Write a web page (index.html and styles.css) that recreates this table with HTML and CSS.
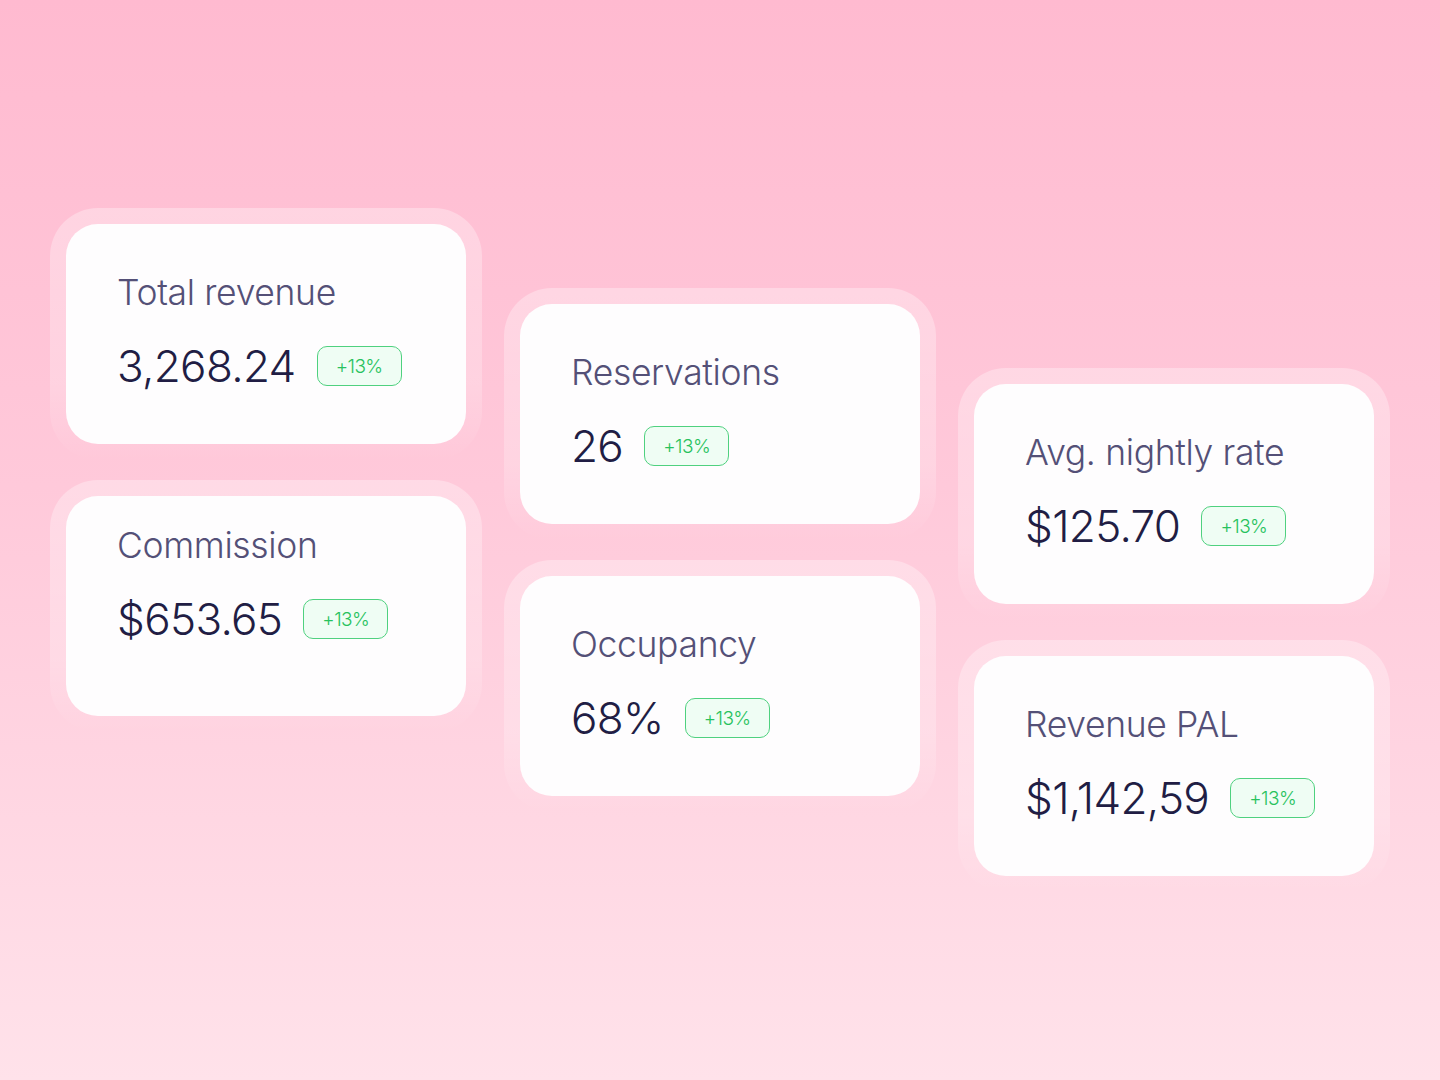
FILE: index.html
```html
<!DOCTYPE html>
<html lang="en">
<head>
<meta charset="utf-8">
<title>Stats</title>
<link rel="stylesheet" href="styles.css">
</head>
<body>
<main class="board">
  <div class="col">
    <div class="halo"><div class="card">
      <div class="label">Total revenue</div>
      <div class="row"><span class="value">3,268.24</span><span class="badge">+13%</span></div>
    </div></div>
    <div class="halo"><div class="card card-high">
      <div class="label">Commission</div>
      <div class="row"><span class="value">$653.65</span><span class="badge">+13%</span></div>
    </div></div>
  </div>
  <div class="col col-2">
    <div class="halo"><div class="card">
      <div class="label">Reservations</div>
      <div class="row"><span class="value">26</span><span class="badge">+13%</span></div>
    </div></div>
    <div class="halo"><div class="card">
      <div class="label">Occupancy</div>
      <div class="row"><span class="value">68%</span><span class="badge">+13%</span></div>
    </div></div>
  </div>
  <div class="col col-3">
    <div class="halo"><div class="card">
      <div class="label">Avg. nightly rate</div>
      <div class="row"><span class="value">$125.70</span><span class="badge">+13%</span></div>
    </div></div>
    <div class="halo"><div class="card">
      <div class="label">Revenue PAL</div>
      <div class="row"><span class="value">$1,142,59</span><span class="badge">+13%</span></div>
    </div></div>
  </div>
</main>
</body>
</html>
```

FILE: styles.css
```css
html, body {
  margin: 0;
  padding: 0;
}
body {
  width: 1440px;
  height: 1080px;
  overflow: hidden;
  background: linear-gradient(180deg, #ffbad0 0%, #ffc9da 45%, #ffe2ea 100%);
  font-family: Inter, "Noto Sans", sans-serif;
}
.board {
  display: flex;
  align-items: flex-start;
  gap: 22px;
  padding: 208px 0 0 50px;
}
.col {
  display: flex;
  flex-direction: column;
  gap: 20px;
  width: 432px;
}
.col-2 { padding-top: 80px; }
.col-3 { padding-top: 160px; }
.halo {
  padding: 16px;
  border-radius: 48px;
  background: linear-gradient(180deg, rgba(255,255,255,0.32) 0%, rgba(255,255,255,0.22) 70%, rgba(255,255,255,0) 100%);
}
.card {
  height: 220px;
  box-sizing: border-box;
  background: #fefdfe;
  border-radius: 32px;
  padding: 48px 40px 0 51px;
}
.card-high { padding-top: 29px; }
.label {
  font-size: 35.5px;
  line-height: 42px;
  font-weight: 300;
  color: #545077;
  letter-spacing: -0.01em;
}
.row {
  display: flex;
  align-items: center;
  gap: 21px;
  margin-top: 28px;
}
.value {
  font-size: 44px;
  line-height: 48px;
  font-weight: 300;
  color: #211d44;
  letter-spacing: -0.015em;
}
.badge {
  display: inline-flex;
  align-items: center;
  justify-content: center;
  width: 83px;
  height: 38px;
  border: 1px solid #4fd17f;
  border-radius: 10px;
  background: #effdf4;
  color: #27c25d;
  font-size: 19px;
  font-weight: 300;
  letter-spacing: -0.03em;
}
```
